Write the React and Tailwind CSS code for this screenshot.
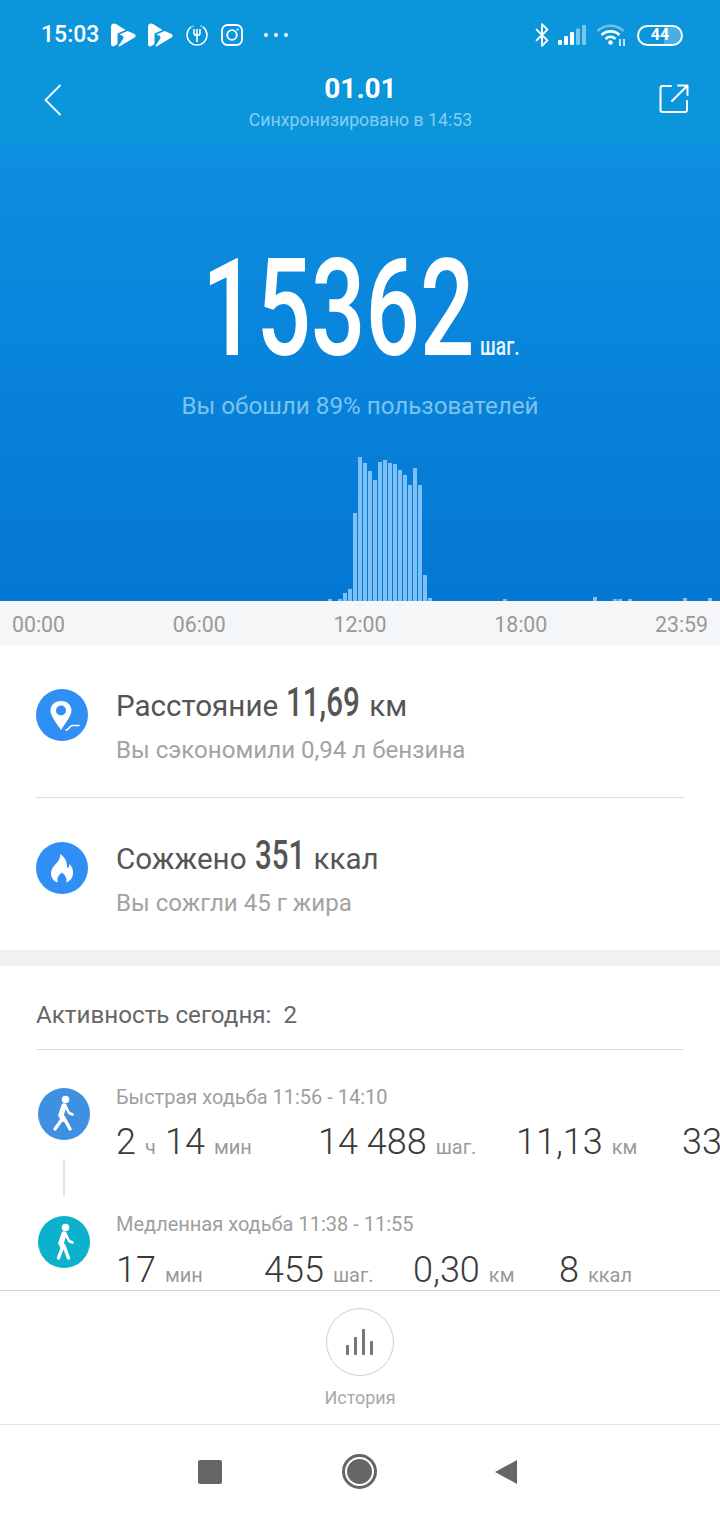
import React from 'react';
import { Bluetooth } from 'lucide-react';

// bar heights by slot, slot i sits at x = 3 + 5 * i
const BARS = {
  65: 2, 67: 2, 68: 8, 69: 12, 70: 88, 71: 144, 72: 138, 73: 130, 74: 121, 75: 139, 76: 141, 77: 138,
  78: 137, 79: 131, 80: 126, 81: 116, 82: 133, 83: 116, 84: 26, 85: 3,
  100: 2, 118: 4, 122: 2, 123: 2, 125: 2, 136: 3, 141: 3,
};

const SLOTS = Array.from({ length: 143 }, (_, i) => BARS[i] || 0);

const PlayLogo = () => (
  <svg viewBox="0 0 26 26" className="w-[26px] h-[26px]" fill="white">
    <path d="M4 1.500 C2 1.500 1 3 1 4.500 V22 C1 24.500 3 25 4.500 24 L7.500 22 V11.500 L15.500 8 L6 2 Z" />
    <path d="M9.500 12.500 L17.500 9 L24.500 12 C26 13 26 14.500 24.500 15.500 L9.500 24.500 C8.500 25 8.500 24 9 23 L13 17 C14 15.500 13.500 14 12 13.500 Z" />
  </svg>
);

const ForkIcon = () => (
  <svg viewBox="0 0 22 22" className="w-[22px] h-[22px]" fill="none" stroke="white">
    <path d="M17 3 A10 10 0 1 1 5 3" strokeWidth="1.500" />
    <path d="M14 2 A10 10 0 0 1 17 3" strokeWidth="1.500" opacity=".5" />
    <path d="M8 2 A10 10 0 0 0 5 3" strokeWidth="1.500" opacity=".5" />
    <path d="M8 5 V9 C8 11 9.500 11.500 11 11.500 C12.500 11.500 14 11 14 9 V5 M11 5 V18" strokeWidth="1.600" />
  </svg>
);

const InstaIcon = () => (
  <svg viewBox="0 0 22 22" className="w-[22px] h-[22px]" fill="none" stroke="white" strokeWidth="1.800">
    <rect x="1" y="1" width="20" height="20" rx="5.500" />
    <circle cx="11" cy="11" r="4.800" />
    <circle cx="16.600" cy="5.400" r="1" fill="white" stroke="none" />
  </svg>
);

const SignalIcon = () => (
  <svg viewBox="0 0 28 20" className="w-7 h-5" fill="white">
    <rect x="0" y="15" width="4" height="5" rx="1" />
    <rect x="6" y="11" width="4" height="9" rx="1" />
    <rect x="12" y="7" width="4" height="13" rx="1" />
    <rect x="18" y="3.500" width="4" height="16.500" rx="1" opacity=".45" />
    <rect x="24" y="0" width="4" height="20" rx="1" opacity=".45" />
  </svg>
);

const WifiIcon = () => (
  <svg viewBox="0 0 30 24" className="w-[30px] h-6" fill="none" stroke="white" strokeWidth="2.600">
    <path d="M1.500 8 C8.500 1 20.500 1 27.500 8" opacity=".4" />
    <path d="M5.500 12 C10.500 7.200 18.500 7.200 23.500 12" />
    <path d="M9.500 16 C12.500 13.200 16.500 13.200 19.500 16" />
    <circle cx="14.500" cy="19.500" r="2.200" fill="white" stroke="none" />
    <path d="M24 16 V23 M28 16 V23" strokeWidth="1.500" />
  </svg>
);

const BatteryIcon = () => (
  <div className="relative w-[46px] h-[21px] rounded-full border-2 border-white overflow-hidden flex items-center justify-center">
    <div className="absolute right-0 top-0 bottom-0 w-[40%] bg-white/25" />
    <span className="relative text-[16px] leading-none font-bold text-white">44</span>
  </div>
);

const ShareIcon = () => (
  <svg viewBox="0 0 30 30" className="w-[30px] h-[30px]" fill="none" stroke="white" strokeWidth="2" strokeLinecap="round" strokeLinejoin="round">
    <path d="M12 2 H3.500 C2.200 2 1.500 2.700 1.500 4 V26 C1.500 27.300 2.200 28 3.500 28 H26 C27.300 28 28 27.300 28 26 V17" />
    <path d="M13 17 L28 2 M19 1.500 H28.500 V11" />
  </svg>
);

const PinIcon = () => (
  <svg viewBox="0 0 52 52" className="w-[52px] h-[52px]">
    <path fillRule="evenodd" fill="white" d="M25 12 C17.500 12 14.500 17.500 14.500 21.500 C14.500 27 21 35 25 41 C27 37.500 35.500 27 35.500 21.500 C35.500 17 32 12 25 12 Z M25 16.500 A5 5 0 1 1 25 26.500 A5 5 0 1 1 25 16.500 Z" />
    <path d="M30 41 C33 41 33.500 36.500 36.500 36.500 H43" fill="none" stroke="white" strokeWidth="1.500" strokeLinecap="round" />
  </svg>
);

const FlameIcon = () => (
  <svg viewBox="0 0 52 52" className="w-[52px] h-[52px]">
    <path fillRule="evenodd" fill="white" d="M24 12 C25 18 20 21 16.500 26 C13.500 31 15 39 22 40.500 C20.500 37 22 33.500 26 30.500 C29.500 33.500 31.500 37 30 40.500 C36.500 38.500 38 32 36.500 27 C35.500 24.500 34.500 23 33.500 22 C33.500 24.500 32.500 25.500 31 26 C31.500 20.500 29 15 24 12 Z" />
  </svg>
);

const WalkIcon = ({ wide }) => (
  <svg viewBox="0 0 52 52" className="w-[52px] h-[52px]" fill="none" stroke="white" strokeLinecap="round" strokeLinejoin="round">
    <circle cx="27.500" cy="11.500" r="3.800" fill="white" stroke="none" />
    <path d="M26 18 L23 27 L25 31" strokeWidth="5.500" />
    <path d="M28 19 L31 25 L34.500 26.500" strokeWidth="2.600" />
    {wide ? <path d="M25 30 L17 41 M26 30 L32 41" strokeWidth="3.400" /> : <path d="M25 30 L20.500 42 M26 30 L30.500 42" strokeWidth="3.400" />}
  </svg>
);

const Condensed = ({ children, width }) => (
  <span className="inline-block origin-left scale-x-[0.72] whitespace-nowrap" style={{ width }}>{children}</span>
);

const Stat = ({ icon, title, value, unit, valueWidth, sub }) => (
  <div className="flex items-center gap-7 h-[152px]">
    <div className="w-[52px] h-[52px] mb-3 shrink-0 rounded-full bg-[#2f8ff5] flex items-center justify-center">{icon}</div>
    <div className="pt-[6px]">
      <div className="flex items-baseline text-[29.600px] leading-[34px] text-[#555]">
        <span>{title}</span>
        <span className="ml-2 text-[41px] font-medium text-[#555]"><Condensed width={valueWidth}>{value}</Condensed></span>
        <span className="ml-[9px]">{unit}</span>
      </div>
      <div className="mt-[13px] text-[24.100px] leading-[28px] text-[#a3a3a3]">{sub}</div>
    </div>
  </div>
);

const Metric = ({ value, unit, className }) => (
  <span className={`flex items-baseline shrink-0 whitespace-nowrap ${className}`}>
    <span className="text-[36px] font-light text-[#3a3a3a]">{value}</span>
    <span className="ml-[9px] text-[20px] text-[#9a9a9a]">{unit}</span>
  </span>
);

export default function App() {
  return (
    <div className="w-[720px] h-[1520px] overflow-hidden bg-white font-['Roboto',sans-serif]">
      {/* Header */}
      <div className="h-[145px] bg-[#0b95db] text-white">
        <div className="h-[68px] pt-[2px] flex items-center pl-[41px] pr-[37px]">
          <span className="text-[23px] font-medium w-[69px]">15:03</span>
          <PlayLogo />
          <span className="w-[11px]" />
          <PlayLogo />
          <span className="w-[13px]" />
          <ForkIcon />
          <span className="w-[13px]" />
          <InstaIcon />
          <span className="flex gap-[6px] ml-[21px]">
            <i className="w-[4px] h-[4px] rounded-full bg-white" />
            <i className="w-[4px] h-[4px] rounded-full bg-white" />
            <i className="w-[4px] h-[4px] rounded-full bg-white" />
          </span>
          <span className="ml-auto flex items-center">
            <Bluetooth className="w-[26px] h-[26px] mr-[3px]" strokeWidth={1.800} />
            <SignalIcon />
            <span className="w-[10px]" />
            <WifiIcon />
            <span className="w-[11px]" />
            <BatteryIcon />
          </span>
        </div>
        <div className="flex items-start justify-between pl-[44px] pr-[31px]">
          <svg viewBox="0 0 18 32" className="w-[18px] h-8 mt-[16px]" fill="none" stroke="white" strokeWidth="1.800">
            <path d="M16.500 1 L1.500 16 L16.500 31" />
          </svg>
          <div className="flex flex-col items-center mt-px">
            <span className="text-[28px] leading-[40px] font-bold">01.01</span>
            <span className="text-[17.700px] leading-[22px] text-[#85cdf3]">Синхронизировано в 14:53</span>
          </div>
          <span className="mt-[16px]"><ShareIcon /></span>
        </div>
      </div>

      {/* Steps hero */}
      <div className="h-[456px] bg-gradient-to-b from-[#0e8fe0] to-[#0477d3] flex flex-col items-center">
        <div className="mt-[97px] h-[135px] flex items-baseline">
          <span className="text-[135px] leading-[135px] font-medium text-white w-[278px]">
            <span className="inline-block origin-left scale-x-[0.71]">15362</span>
          </span>
          <span className="text-[25px] leading-[26px] text-white/90 font-medium inline-block origin-left scale-x-[0.77] w-[38px]">шаг.</span>
        </div>
        <div className="mt-[14px] text-[24.200px] leading-[30px] text-[#7cc3ef]">Вы обошли 89% пользователей</div>
        <div className="mt-auto w-full h-[144px] flex items-end gap-px pl-[3px]">
          {SLOTS.map((h, i) => (
            <div key={i} className="w-1 shrink-0 bg-[#7cc0f5]" style={{ height: h }} />
          ))}
        </div>
      </div>

      {/* Time axis */}
      <div className="h-[44px] pt-1 bg-[#f5f6f8] flex items-center justify-between px-3 text-[21.300px] text-[#999]">
        <span>00:00</span><span>06:00</span><span>12:00</span><span>18:00</span><span>23:59</span>
      </div>

      {/* Distance and calories */}
      <div className="px-9">
        <Stat icon={<PinIcon />} title="Расстояние" value="11,69" valueWidth={74} unit="км" sub="Вы сэкономили 0,94 л бензина" />
        <div className="h-px bg-[#dcdcdc]" />
        <Stat icon={<FlameIcon />} title="Сожжено" value="351" valueWidth={50} unit="ккал" sub="Вы сожгли 45 г жира" />
      </div>
      <div className="h-4 bg-[#eff1f2]" />

      {/* Activities */}
      <div className="h-[324px] overflow-hidden">
        <div className="mx-9 h-[84px] pt-4 flex items-center gap-3 border-b border-[#dcdcdc] text-[24.200px] text-[#666]">
          <span>Активность сегодня:</span><span>2</span>
        </div>
        <div className="flex pl-[38px] pt-[38px]">
          <div className="w-[52px] shrink-0 flex flex-col items-center">
            <div className="w-[52px] h-[52px] rounded-full bg-[#3f8fe2]"><WalkIcon wide /></div>
            <div className="w-[2px] h-[37px] mt-[19px] bg-[#e3e3e3]" />
            <div className="w-[52px] h-[52px] mt-[20px] rounded-full bg-[#0cb2cc]"><WalkIcon /></div>
          </div>
          <div className="ml-[26px] min-w-0 -mt-[3px]">
            <div className="text-[20px] leading-[24px] text-[#9e9e9e]">Быстрая ходьба 11:56 - 14:10</div>
            <div className="flex items-baseline leading-[42px] mt-[12px]">
              <Metric value="2" unit="ч" className="w-[49px]" />
              <Metric value="14" unit="мин" className="w-[153px]" />
              <Metric value="14 488" unit="шаг." className="w-[198px]" />
              <Metric value="11,13" unit="км" className="w-[166px]" />
              <Metric value="33" unit="" />
            </div>
            <div className="mt-[44px] text-[20px] leading-[24px] text-[#9e9e9e]">Медленная ходьба 11:38 - 11:55</div>
            <div className="flex items-baseline leading-[42px] mt-[13px]">
              <Metric value="17" unit="мин" className="w-[148px]" />
              <Metric value="455" unit="шаг." className="w-[149px]" />
              <Metric value="0,30" unit="км" className="w-[146px]" />
              <Metric value="8" unit="ккал" />
            </div>
          </div>
        </div>
      </div>

      {/* History */}
      <div className="h-[134px] border-t border-[#d4d4d4] flex flex-col items-center pt-[17px]">
        <div className="w-[68px] h-[68px] rounded-full border border-[#cfcfcf] flex items-center justify-center">
          <svg viewBox="0 0 28 26" className="w-7 h-[26px]" fill="#777">
            <rect x="0" y="16" width="3" height="10" rx=".5" />
            <rect x="8" y="8" width="3" height="18" rx=".5" />
            <rect x="16" y="0" width="3" height="26" rx=".5" />
            <rect x="24" y="12" width="3" height="14" rx=".5" />
          </svg>
        </div>
        <span className="mt-[10px] text-[18px] leading-[24px] text-[#a8a8a8]">История</span>
      </div>

      {/* Nav bar */}
      <div className="h-[96px] border-t border-[#e5e5e5] flex items-center pb-[2px]">
        <div className="w-[720px] flex items-center justify-between pl-[198px] pr-[203px]">
          <div className="w-6 h-6 rounded-[2px] bg-[#666]" />
          <div className="w-[35px] h-[35px] rounded-full border-[3px] border-[#666] flex items-center justify-center ml-[2px]">
            <div className="w-[25px] h-[25px] rounded-full bg-[#666]" />
          </div>
          <svg viewBox="0 0 23 26" className="w-[23px] h-[26px]" fill="#666">
            <path d="M23 1 V25 L1 13 Z" />
          </svg>
        </div>
      </div>
    </div>
  );
}
